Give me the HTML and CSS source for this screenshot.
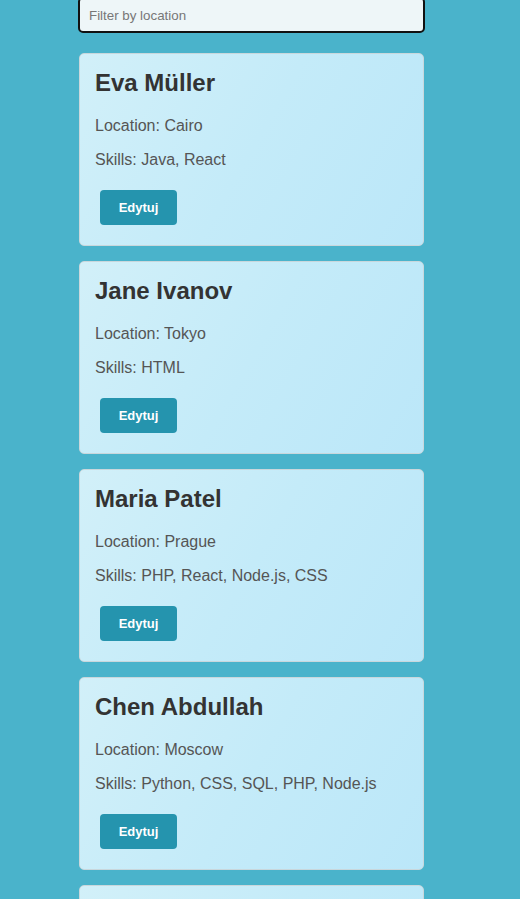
FILE: index.html
```html
<!DOCTYPE html>
<html lang="en">
<head>
<meta charset="utf-8">
<title>Users</title>
<link rel="stylesheet" href="styles.css">
</head>
<body>
<main class="list">
  <input class="filter" type="text" placeholder="Filter by location">
  <div class="card">
    <h2 class="name">Eva Müller</h2>
    <p class="info">Location: Cairo</p>
    <p class="info">Skills: Java, React</p>
    <button class="edit">Edytuj</button>
  </div>
  <div class="card">
    <h2 class="name">Jane Ivanov</h2>
    <p class="info">Location: Tokyo</p>
    <p class="info">Skills: HTML</p>
    <button class="edit">Edytuj</button>
  </div>
  <div class="card">
    <h2 class="name">Maria Patel</h2>
    <p class="info">Location: Prague</p>
    <p class="info">Skills: PHP, React, Node.js, CSS</p>
    <button class="edit">Edytuj</button>
  </div>
  <div class="card">
    <h2 class="name">Chen Abdullah</h2>
    <p class="info">Location: Moscow</p>
    <p class="info">Skills: Python, CSS, SQL, PHP, Node.js</p>
    <button class="edit">Edytuj</button>
  </div>
  <div class="card">
    <h2 class="name">John Smith</h2>
    <p class="info">Location: Berlin</p>
    <p class="info">Skills: JavaScript</p>
    <button class="edit">Edytuj</button>
  </div>
</main>
</body>
</html>
```
FILE: styles.css
```css
html, body {
  margin: 0;
  padding: 0;
  background: #4ab3cb;
  font-family: "Liberation Sans", Arial, sans-serif;
}

.list {
  width: 347px;
  margin-left: 78px;
  margin-top: -3px;
  display: flex;
  flex-direction: column;
}

.filter {
  box-sizing: border-box;
  width: 347px;
  height: 36px;
  padding: 0 9px;
  border: 2px solid #111;
  border-radius: 5px;
  background: #eef6f8;
  font-family: "Liberation Sans", Arial, sans-serif;
  font-size: 13.33px;
  color: #333;
  margin: 0 0 20px 0;
  outline: none;
}

.filter::placeholder {
  color: #777;
}

.card {
  margin: 0 1px 15px 1px;
  padding: 15px;
  border: 1px solid #c9d7dc;
  border-radius: 5px;
  background: linear-gradient(120deg, #d2f0f9 0%, #c4ebf9 50%, #bbe7f9 100%);
}

.name {
  margin: 0 0 19.92px 0;
  font-size: 24px;
  font-weight: bold;
  color: #333;
}

.info {
  margin: 0 0 16px 0;
  font-size: 16px;
  color: #555;
}

.edit {
  align-self: flex-start;
  width: 77px;
  margin: 5px;
  padding: 10px 0;
  border: none;
  border-radius: 4px;
  background: #2594ae;
  color: #fff;
  font-family: "Liberation Sans", Arial, sans-serif;
  font-size: 13px;
  font-weight: bold;
  line-height: 15px;
  text-align: center;
  cursor: pointer;
}
```
